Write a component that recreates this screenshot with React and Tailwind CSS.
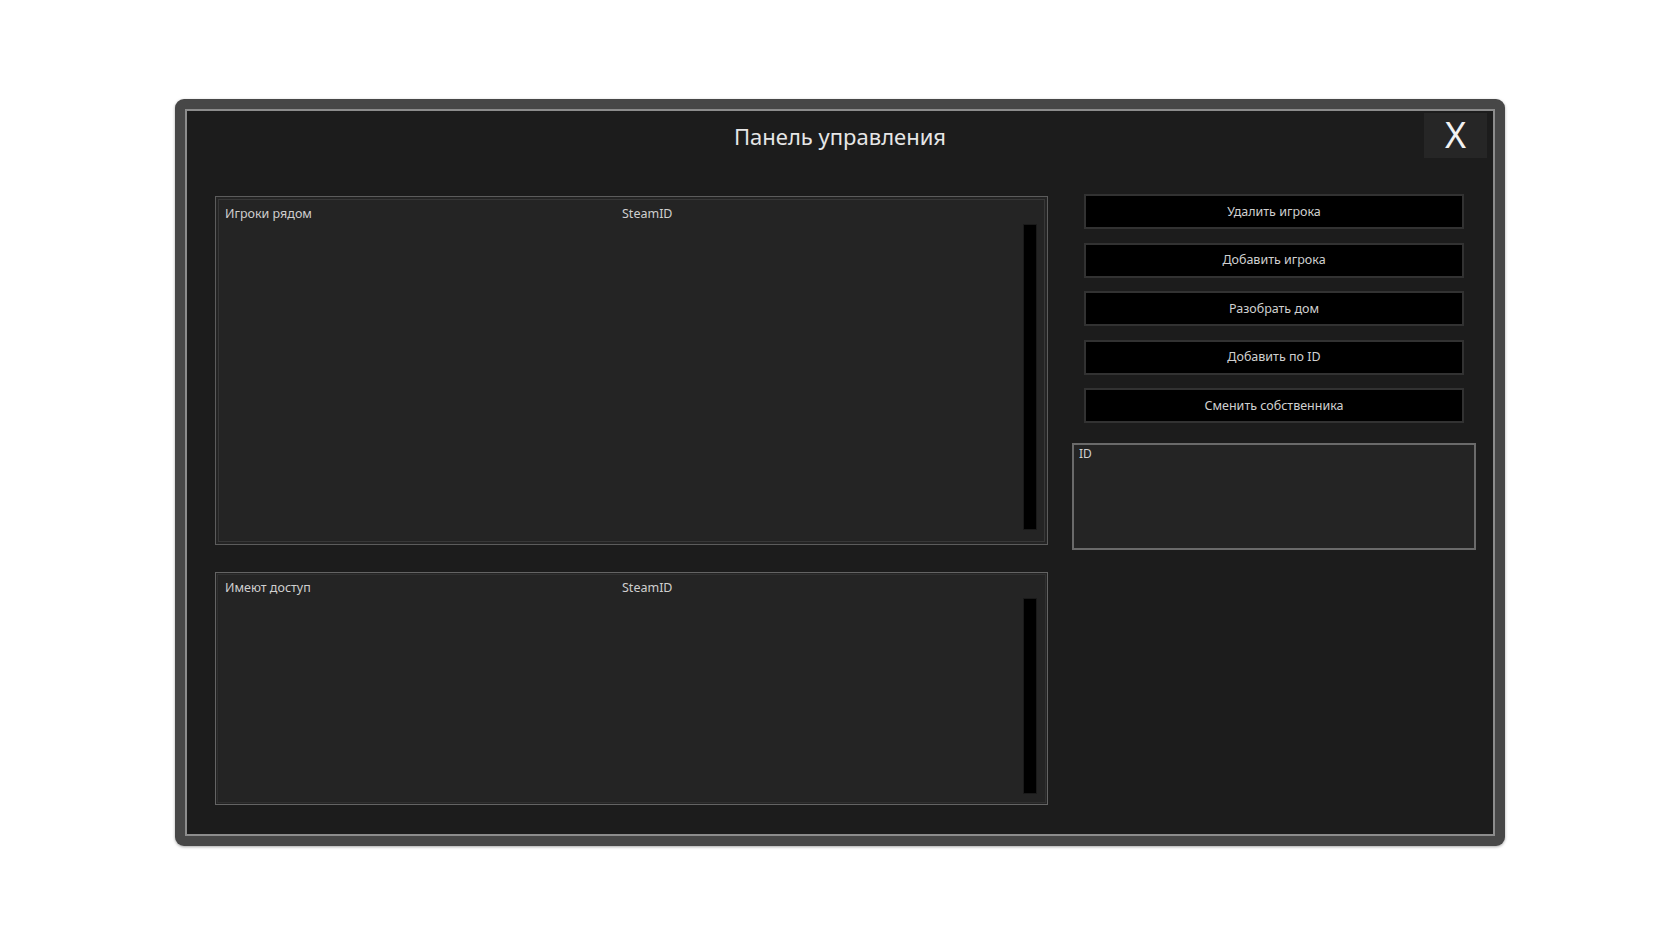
const font = { fontFamily: '"Noto Sans", "Open Sans", "DejaVu Sans", sans-serif' };

const actions = [
  "Удалить игрока",
  "Добавить игрока",
  "Разобрать дом",
  "Добавить по ID",
  "Сменить собственника",
];

// List box with two column headers and a dark scroll track on the right
const ListBox = ({ title, className, headerPad, trackPad }) => (
  <div className={`flex flex-col bg-[#242424] ${className}`}>
    <div className={`flex h-[18px] pl-[9px] text-[12.5px] leading-[18px] text-[#cfcfcf] ${headerPad}`}>
      <span className="w-[397px]">{title}</span>
      <span>SteamID</span>
    </div>
    <div className={`flex flex-1 ${trackPad}`}>
      <div className="flex-1" />
      <div className="mr-[11px] w-[12px] bg-black shadow-[0_0_0_1px_#1a1a1a]" />
    </div>
  </div>
);

export default function App() {
  return (
    <div className="min-h-screen bg-white pt-[99px] pl-[175px]" style={font}>
      <div className="h-[747px] w-[1330px] rounded-[9px] bg-[#474747] p-[10px] shadow-[0_1px_3px_rgba(0,0,0,0.35)]">
        <div className="relative flex h-full flex-col border-2 border-[#8c8c8c] bg-[#1c1c1c]">
          <button className="absolute top-[2px] right-[6px] flex h-[45px] w-[63px] items-center justify-center bg-[#262626] pb-[2px] text-[36px] leading-none font-normal text-[#f2f2f2]">
            X
          </button>

          <div className="h-[83px] pt-[10px] text-center text-[22px] leading-[30px] text-[#e6e6e6]">
            Панель управления
          </div>

          <div className="flex pl-[28px]">
            <div className="flex w-[833px] flex-col gap-[27px] pt-[2px]">
              <ListBox
                title="Игроки рядом"
                className="h-[349px] border border-[#5c5c5c] shadow-[inset_0_0_0_2px_#242424,inset_0_0_0_3px_#383838]"
                headerPad="mt-[8px]"
                trackPad="mt-[2px] mb-[15px]"
              />
              <ListBox
                title="Имеют доступ"
                className="h-[233px] border border-[#646464] shadow-[inset_0_0_0_1px_#242424,inset_0_0_0_2px_#303030]"
                headerPad="mt-[6px]"
                trackPad="mt-[2px] mb-[11px]"
              />
            </div>

            <div className="ml-[24px] flex w-[404px] flex-col items-center">
              <div className="flex w-[380px] flex-col gap-[13.5px]">
                {actions.map((label) => (
                  <button
                    key={label}
                    className="h-[35px] w-full border-2 border-[#323232] bg-black pt-[1px] text-[12.5px] text-[#d0d0d0]"
                  >
                    {label}
                  </button>
                ))}
              </div>
              <div className="mt-[20px] h-[107px] w-full border-2 border-[#6a6a6a] bg-[#242424] px-[5px] pt-[1px] text-[12px] leading-[16px] text-[#d0d0d0]">
                ID
              </div>
            </div>
          </div>
        </div>
      </div>
    </div>
  );
}
